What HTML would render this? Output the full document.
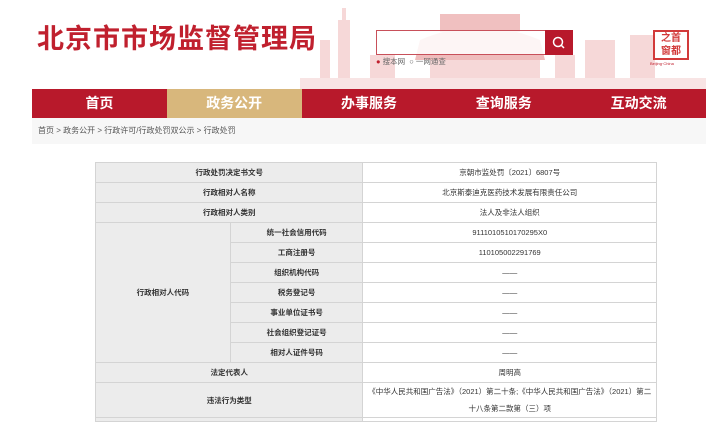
<!DOCTYPE html><html><head><meta charset="utf-8"><style>
*{margin:0;padding:0;box-sizing:border-box}
body{width:706px;height:435px;background:#fff;font-family:"Liberation Sans","Noto Sans CJK SC",sans-serif;position:relative;overflow:hidden}
.a{position:absolute}
.title{left:37px;top:22px;font-size:27px;font-weight:bold;color:#c0202e;letter-spacing:1px;white-space:nowrap;line-height:34px}
.nav{left:32px;top:89px;width:674px;height:29px;background:#b8192b;display:flex}
.nav div{flex:1;color:#fff;font-size:14px;font-weight:bold;text-align:center;line-height:29px}
.nav .on{background:#d8b77c}
.bc{left:32px;top:118px;width:674px;height:26px;background:#f7f7f7;font-size:8px;color:#555;line-height:26px;padding-left:6px}
table{position:absolute;left:95px;top:162px;width:562px;border-collapse:collapse;font-size:7.5px;color:#333}
td{border:1px solid #d4d4d4;height:20px;text-align:center;padding:0}
td.l{background:#ececec;font-weight:bold}
td.v{width:294px;background:#fff}
tr.e td{height:4px;font-size:0;line-height:0}
</style></head><body>
<svg class="a" style="left:300px;top:0" width="406" height="89">
<g fill="#f6d8d8">
<rect x="38" y="20" width="12" height="65"/><rect x="42" y="8" width="4" height="15"/>
<path d="M120 40 Q180 14 240 40 L245 60 L115 60Z" fill="#efbcbc"/>
<rect x="130" y="60" width="110" height="25"/>
<rect x="140" y="14" width="80" height="18" fill="#f0c0c0"/>
<rect x="285" y="40" width="30" height="45"/><rect x="330" y="35" width="25" height="50"/>
<rect x="70" y="55" width="25" height="30"/><rect x="255" y="55" width="20" height="30"/>
<rect x="20" y="40" width="10" height="45"/>
</g>
<rect x="0" y="78" width="406" height="11" fill="#f8e4e4"/>
</svg>
<div class="a title">北京市市场监督管理局</div>
<div class="a" style="left:376px;top:30px;width:170px;height:25px;border:1px solid #c8505a;background:rgba(255,255,255,.85)"></div>
<div class="a" style="left:545px;top:30px;width:28px;height:25px;background:#b8192b"></div>
<svg class="a" style="left:551px;top:35px" width="16" height="16"><circle cx="7" cy="7" r="4.5" stroke="#fff" stroke-width="1.5" fill="none"/><path d="M10 10L13 13" stroke="#fff" stroke-width="1.5"/></svg>
<div class="a" style="left:376px;top:56px;font-size:7.5px;color:#666;white-space:nowrap"><span style="color:#c0202e">●</span> 搜本网 &nbsp;○ 一网通查</div>
<div class="a" style="left:653px;top:30px;width:36px;height:30px;border:2px solid #d23a3a;background:#fff;font-size:10px;color:#d23a3a;font-weight:bold;line-height:13px;text-align:center">之首<br>窗都</div>
<div class="a" style="left:650px;top:61px;font-size:4px;color:#c0202e">Beijing·China</div>
<div class="a nav"><div>首页</div><div class="on">政务公开</div><div>办事服务</div><div>查询服务</div><div>互动交流</div></div>
<div class="a bc">首页 &gt; 政务公开 &gt; 行政许可/行政处罚双公示 &gt; 行政处罚</div>
<table>
<tr><td class="l" colspan="2">行政处罚决定书文号</td><td class="v">京朝市监处罚〔2021〕6807号</td></tr>
<tr><td class="l" colspan="2">行政相对人名称</td><td class="v">北京斯泰迪克医药技术发展有限责任公司</td></tr>
<tr><td class="l" colspan="2">行政相对人类别</td><td class="v">法人及非法人组织</td></tr>
<tr><td class="l" rowspan="7" style="width:135px">行政相对人代码</td><td class="l" style="width:133px">统一社会信用代码</td><td class="v">9111010510170295X0</td></tr>
<tr><td class="l">工商注册号</td><td class="v">110105002291769</td></tr>
<tr><td class="l">组织机构代码</td><td class="v">——</td></tr>
<tr><td class="l">税务登记号</td><td class="v">——</td></tr>
<tr><td class="l">事业单位证书号</td><td class="v">——</td></tr>
<tr><td class="l">社会组织登记证号</td><td class="v">——</td></tr>
<tr><td class="l">相对人证件号码</td><td class="v">——</td></tr>
<tr><td class="l" colspan="2">法定代表人</td><td class="v">周明高</td></tr>
<tr><td class="l" colspan="2" style="height:35px">违法行为类型</td><td class="v" style="line-height:17px;padding:0 2px">《中华人民共和国广告法》（2021）第二十条;《中华人民共和国广告法》（2021）第二十八条第二款第（三）项</td></tr>
<tr class="e"><td class="l" colspan="2"></td><td class="v"></td></tr>
</table>
</body></html>
